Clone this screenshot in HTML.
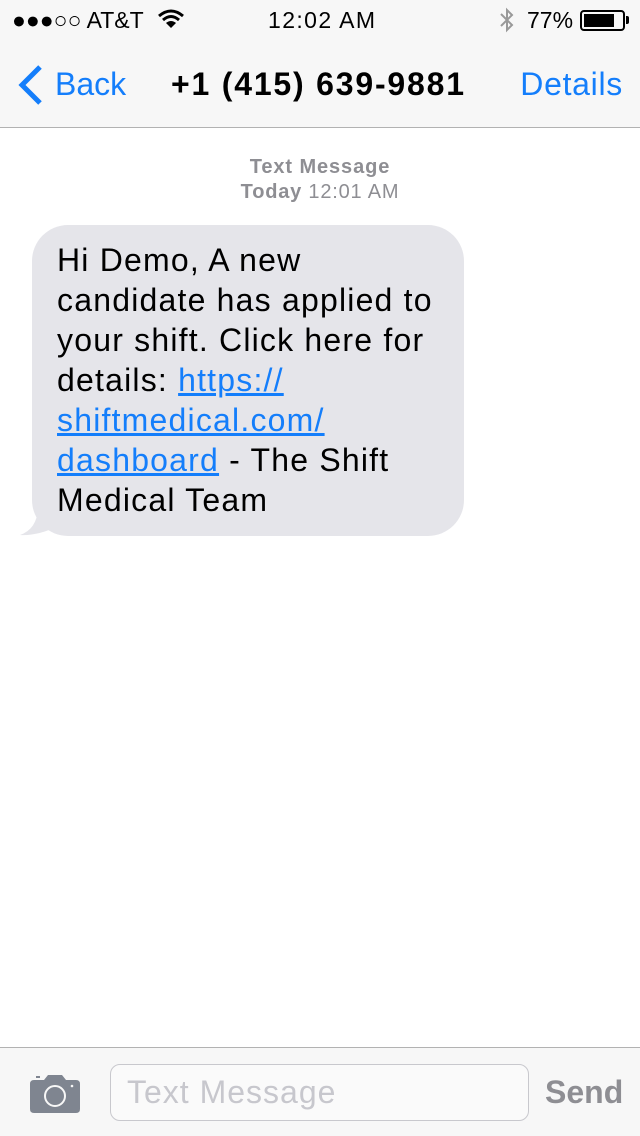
<!DOCTYPE html>
<html><head><meta charset="utf-8"><style>
*{margin:0;padding:0;box-sizing:border-box}
body{width:640px;height:1136px;background:#fff;font-family:"Liberation Sans",sans-serif;position:relative;overflow:hidden}
.abs{position:absolute;white-space:nowrap}
#top{position:absolute;left:0;top:0;width:640px;height:128px;background:#f7f7f7;border-bottom:1px solid #b2b2b2}
#bot{position:absolute;left:0;top:1047px;width:640px;height:89px;background:#f7f7f7;border-top:1px solid #b2b2b2}
.blue{color:#147efb}
#bubble{position:absolute;left:32px;top:225px;width:432px;height:311px;background:#e5e5ea;border-radius:36px}
#txt{position:absolute;left:57px;top:240px;font-size:32px;line-height:40px;color:#000;white-space:nowrap;letter-spacing:1.2px}
#txt a{color:#147efb;text-decoration:underline}
</style></head><body>
<div id="top">
 <div class="abs" style="left:12px;top:7px;font-size:23px;">●●●○○ AT&amp;T</div>
 <svg class="abs" style="left:158px;top:9px" width="26" height="20" viewBox="0 0 26 20"><path d="M1 7 Q13 -3 25 7" stroke="#000" stroke-width="3" fill="none"/><path d="M5 11 Q13 4 21 11" stroke="#000" stroke-width="3" fill="none"/><path d="M13 19 L8 14 Q13 10 18 14 Z" fill="#000"/></svg>
 <div class="abs" style="left:268px;top:7px;font-size:23px;letter-spacing:1.4px">12:02 AM</div>
 <svg class="abs" style="left:499px;top:7px" width="16" height="26" viewBox="0 0 16 26"><path d="M2 7 L13 18 L8 23 V3 L13 8 L2 19" stroke="#999" stroke-width="2" fill="none"/></svg>
 <div class="abs" style="left:527px;top:7px;font-size:23px;">77%</div>
 <div class="abs" style="left:580px;top:10px;width:45px;height:21px;border:2px solid #000;border-radius:4px;padding:2px"><div style="width:30px;height:13px;background:#000"></div></div>
 <div class="abs" style="left:626px;top:16px;width:3px;height:8px;background:#000;border-radius:0 2px 2px 0"></div>
 <svg class="abs" style="left:16px;top:64px" width="28" height="42" viewBox="0 0 28 42"><path d="M24 3 L6 21 L24 39" stroke="#147efb" stroke-width="5" fill="none"/></svg>
 <div class="abs blue" style="left:55px;top:66px;font-size:32px;">Back</div>
 <div class="abs" style="left:171px;top:66px;font-size:32px;font-weight:bold;letter-spacing:1.8px">+1 (415) 639-9881</div>
 <div class="abs blue" style="right:17px;top:66px;font-size:32px;letter-spacing:0.7px">Details</div>
</div>
<div class="abs" style="left:0;width:640px;text-align:center;top:156px;font-size:20px;color:#8e8e93;font-weight:bold;letter-spacing:0.9px">Text Message</div>
<div class="abs" style="left:0;width:640px;text-align:center;top:181px;font-size:20px;color:#8e8e93;letter-spacing:0.8px"><b>Today</b> 12:01 AM</div>
<svg class="abs" style="left:18px;top:500px" width="50" height="40" viewBox="0 0 50 40"><path d="M20 0 Q22 28 2 35 Q20 36 40 26 Z" fill="#e5e5ea"/></svg>
<div id="bubble"></div>
<div id="txt">Hi Demo, A new<br>candidate has applied to<br>your shift. Click here for<br>details: <a>https://</a><br><a>shiftmedical.com/</a><br><a>dashboard</a> - The Shift<br>Medical Team</div>
<div id="bot">
 <svg class="abs" style="left:30px;top:27px" width="50" height="38" viewBox="0 0 50 38"><path d="M4 5 H14 L18 0 H32 L36 5 H46 Q50 5 50 9 V34 Q50 38 46 38 H4 Q0 38 0 34 V9 Q0 5 4 5 Z" fill="#7f8590"/><rect x="6" y="1" width="4" height="2" fill="#7f8590"/><circle cx="25" cy="21" r="10" fill="none" stroke="#f7f7f7" stroke-width="2"/><circle cx="42" cy="11" r="1.3" fill="#f7f7f7"/></svg>
 <div class="abs" style="left:110px;top:16px;width:419px;height:57px;border:1px solid #c8c8cd;border-radius:10px;background:#fafafa"></div>
 <div class="abs" style="left:127px;top:26px;font-size:32px;color:#c7c7cd;letter-spacing:1px">Text Message</div>
 <div class="abs" style="left:545px;top:26px;font-size:32px;font-weight:bold;color:#8e8e93">Send</div>
</div>
</body></html>
